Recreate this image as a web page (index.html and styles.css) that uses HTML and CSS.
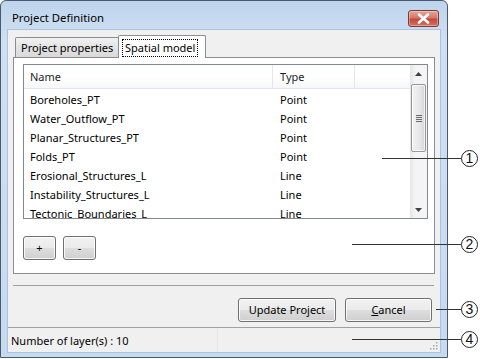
FILE: index.html
```html
<!DOCTYPE html>
<html>
<head>
<meta charset="utf-8">
<link rel="stylesheet" href="styles.css">
</head>
<body>
<div class="stage">
  <div class="window">
    <div class="titlebar">
      <span class="title">Project Definition</span>
      <div class="close">
        <svg width="13" height="11" viewBox="0 0 13 11"><path d="M2 1.5 L11 9.5 M11 1.5 L2 9.5" stroke="#fff" stroke-width="2.6" stroke-linecap="round"/></svg>
      </div>
    </div>
    <div class="client">
      <div class="tabs">
        <div class="tabbar">
          <div class="tab">Project properties</div>
          <div class="tab active"><span class="focus">Spatial model</span></div>
        </div>
        <div class="pane">
          <div class="table">
            <div class="grid">
              <div class="head">
                <div class="hc c1">Name</div>
                <div class="hc c2">Type</div>
                <div class="hc c3"></div>
              </div>
              <div class="body">
                <div class="row"><span class="c1">Boreholes_PT</span><span class="c2">Point</span></div>
                <div class="row"><span class="c1">Water_Outflow_PT</span><span class="c2">Point</span></div>
                <div class="row"><span class="c1">Planar_Structures_PT</span><span class="c2">Point</span></div>
                <div class="row"><span class="c1">Folds_PT</span><span class="c2">Point</span></div>
                <div class="row"><span class="c1">Erosional_Structures_L</span><span class="c2">Line</span></div>
                <div class="row"><span class="c1">Instability_Structures_L</span><span class="c2">Line</span></div>
                <div class="row"><span class="c1">Tectonic_Boundaries_L</span><span class="c2">Line</span></div>
              </div>
            </div>
            <div class="scrollbar">
              <div class="arrow up"><svg width="7" height="4" viewBox="0 0 7 4"><path d="M0 4 L3.5 0 L7 4Z" fill="#404040"/></svg></div>
              <div class="thumb">
                <div class="grip"><i></i><i></i><i></i><i></i></div>
              </div>
              <div class="track"></div>
              <div class="arrow down"><svg width="7" height="4" viewBox="0 0 7 4"><path d="M0 0 L3.5 4 L7 0Z" fill="#404040"/></svg></div>
            </div>
          </div>
          <div class="btnrow">
            <button class="btn small">+</button>
            <button class="btn small">-</button>
          </div>
        </div>
      </div>
      <div class="sep"></div>
      <div class="actions">
        <button class="btn update">Update Project</button>
        <button class="btn cancel"><u>C</u>ancel</button>
      </div>
      <div class="status">
        <div class="panel first">Number of layer(s) : 10</div>
        <div class="panel rest"></div>
        <svg class="sizegrip" width="8" height="8" viewBox="0 0 8 8">
          <rect x="6" y="0" width="1.5" height="1.5" fill="#a8a8a8"/>
          <rect x="3" y="3" width="1.5" height="1.5" fill="#a8a8a8"/>
          <rect x="6" y="3" width="1.5" height="1.5" fill="#a8a8a8"/>
          <rect x="0" y="6" width="1.5" height="1.5" fill="#a8a8a8"/>
          <rect x="3" y="6" width="1.5" height="1.5" fill="#a8a8a8"/>
          <rect x="6" y="6" width="1.5" height="1.5" fill="#a8a8a8"/>
        </svg>
      </div>
    </div>
  </div>

  <div class="callout" style="top:158px; left:382px; width:79px;"><span class="num">1</span></div>
  <div class="callout" style="top:244px; left:352px; width:109px;"><span class="num">2</span></div>
  <div class="callout" style="top:309px; left:436px; width:25px;"><span class="num">3</span></div>
  <div class="callout" style="top:339px; left:352px; width:109px;"><span class="num">4</span></div>
</div>
</body>
</html>
```

FILE: styles.css
```css
* { box-sizing: border-box; }
html, body { margin: 0; padding: 0; background: #fff; }
body {
  font-family: "Noto Sans", "Open Sans", sans-serif;
  font-size: 11px;
  color: #000;
}
.stage {
  position: relative;
  width: 480px;
  height: 359px;
  overflow: hidden;
}
.window {
  width: 448px;
  height: 358px;
  border: 1px solid #4a5a6e;
  border-radius: 6px 6px 0 0;
  background: linear-gradient(#bed4ec, #cfe0f2 40px, #c6daf0);
  padding: 0 7px 5px 7px;
  display: flex;
  flex-direction: column;
}
.titlebar {
  height: 29px;
  flex: none;
  display: flex;
  align-items: flex-start;
  justify-content: space-between;
}
.title {
  margin-left: 4px;
  margin-top: 9px;
  font-size: 11.3px;
  color: #000;
}
.close {
  margin-top: 9px;
  margin-right: 1px;
  width: 31px;
  height: 17px;
  border: 1px solid #7c3a34;
  border-radius: 3px;
  background: linear-gradient(#e8a497, #d6786a 45%, #c4483a 55%, #d27262);
  display: flex;
  align-items: center;
  justify-content: center;
  box-shadow: inset 0 0 0 1px rgba(255,255,255,0.35);
}
.client {
  flex: 1;
  background: #f0f0f0;
  box-shadow: 0 0 0 1px #a9c4e2;
  display: flex;
  flex-direction: column;
}
.tabs {
  margin: 5px 5px 0 5px;
}
.tabbar {
  display: flex;
  align-items: flex-end;
  height: 22px;
  padding-left: 2px;
  position: relative;
  z-index: 1;
}
.tab {
  height: 20px;
  padding: 0 5px;
  border: 1px solid #898c95;
  border-bottom: none;
  border-radius: 2px 2px 0 0;
  background: linear-gradient(#f2f2f2, #e3e3e3 50%, #d9d9d9);
  display: flex;
  align-items: center;
  white-space: nowrap;
}
.tab:first-child { width: 104px; }
.tab.active {
  height: 23px;
  width: 88px;
  margin-left: -1px;
  margin-bottom: -1px;
  background: #fff;
  padding: 0 3px;
  align-items: flex-start;
  padding-top: 3px;
}
.focus {
  border: 1px dotted #000;
  padding: 0 2px;
  line-height: 16px;
}
.pane {
  height: 217px;
  background: #fff;
  border: 1px solid #898c95;
  padding: 6px 6px 0 9px;
}
.table {
  height: 155px;
  border: 1px solid #828790;
  display: flex;
  background: #fff;
}
.grid {
  flex: 1;
  overflow: hidden;
}
.head {
  height: 24px;
  display: flex;
  background: linear-gradient(#fff, #fff 50%, #f6f7f9);
  border-bottom: 1px solid #e3e6ea;
}
.hc {
  display: flex;
  align-items: center;
  color: #1e1e1e;
  border-right: 1px solid #e3e6ea;
}
.c1 { width: 249px; padding-left: 6px; }
.c2 { width: 82px; padding-left: 7px; }
.c3 { flex: 1; border-right: none; }
.body {
  padding-top: 1px;
}
.row {
  height: 19px;
  display: flex;
  align-items: center;
  white-space: nowrap;
}
.row span { display: block; }
.scrollbar {
  width: 17px;
  flex: none;
  background: linear-gradient(90deg, #e6e6e6, #f4f4f4 30%, #f4f4f4);
  display: flex;
  flex-direction: column;
  align-items: center;
}
.arrow {
  height: 17px;
  width: 17px;
  display: flex;
  align-items: center;
  justify-content: center;
}
.thumb {
  margin-top: 2px;
  width: 15px;
  height: 68px;
  border: 1px solid #979797;
  border-radius: 2px;
  background: linear-gradient(90deg, #f3f3f3, #e9e9e9 50%, #d6d6d6);
  box-shadow: inset 0 0 0 1px rgba(255,255,255,0.7);
  display: flex;
  align-items: center;
  justify-content: center;
}
.grip { display: flex; flex-direction: column; gap: 1px; }
.grip i {
  display: block;
  width: 6px;
  height: 1px;
  background: #6a6a6a;
}
.track { flex: 1; }
.btnrow {
  margin-top: 17px;
  display: flex;
  gap: 7px;
}
.btn {
  font-family: inherit;
  font-size: 11px;
  color: #000;
  height: 24px;
  border: 1px solid #707070;
  border-radius: 3px;
  background: linear-gradient(#f2f2f2, #ebebeb 48%, #dddddd 52%, #cfcfcf);
  box-shadow: inset 0 0 0 1px rgba(255,255,255,0.8);
  padding: 0;
  line-height: 20px;
}
.btn.small { width: 33px; }
.btn u { text-decoration: underline; }
.sep {
  margin: 11px 6px 0 5px;
  height: 1px;
  background: #a0a0a0;
}
.actions {
  margin-top: 12px;
  display: flex;
  justify-content: flex-end;
  gap: 9px;
  padding-right: 8px;
}
.update { width: 98px; }
.cancel { width: 87px; }
.status {
  margin-top: 5px;
  flex: 1;
  border-top: 1px solid #a0a0a0;
  display: flex;
  position: relative;
}
.panel {
  display: flex;
  align-items: center;
  padding-left: 3px;
}
.panel.first {
  width: 210px;
  border-right: 1px solid #e6e6e6;
}
.panel.rest { flex: 1; }
.sizegrip {
  position: absolute;
  right: 2px;
  bottom: 2px;
}
.callout {
  position: absolute;
  height: 1px;
  background: #333;
}
.num {
  position: absolute;
  left: 100%;
  top: -8px;
  width: 17px;
  height: 17px;
  border: 1px solid #222;
  border-radius: 50%;
  background: #fff;
  font-family: "Liberation Sans", sans-serif;
  font-size: 14px;
  line-height: 15px;
  text-align: center;
  color: #111;
}
```
